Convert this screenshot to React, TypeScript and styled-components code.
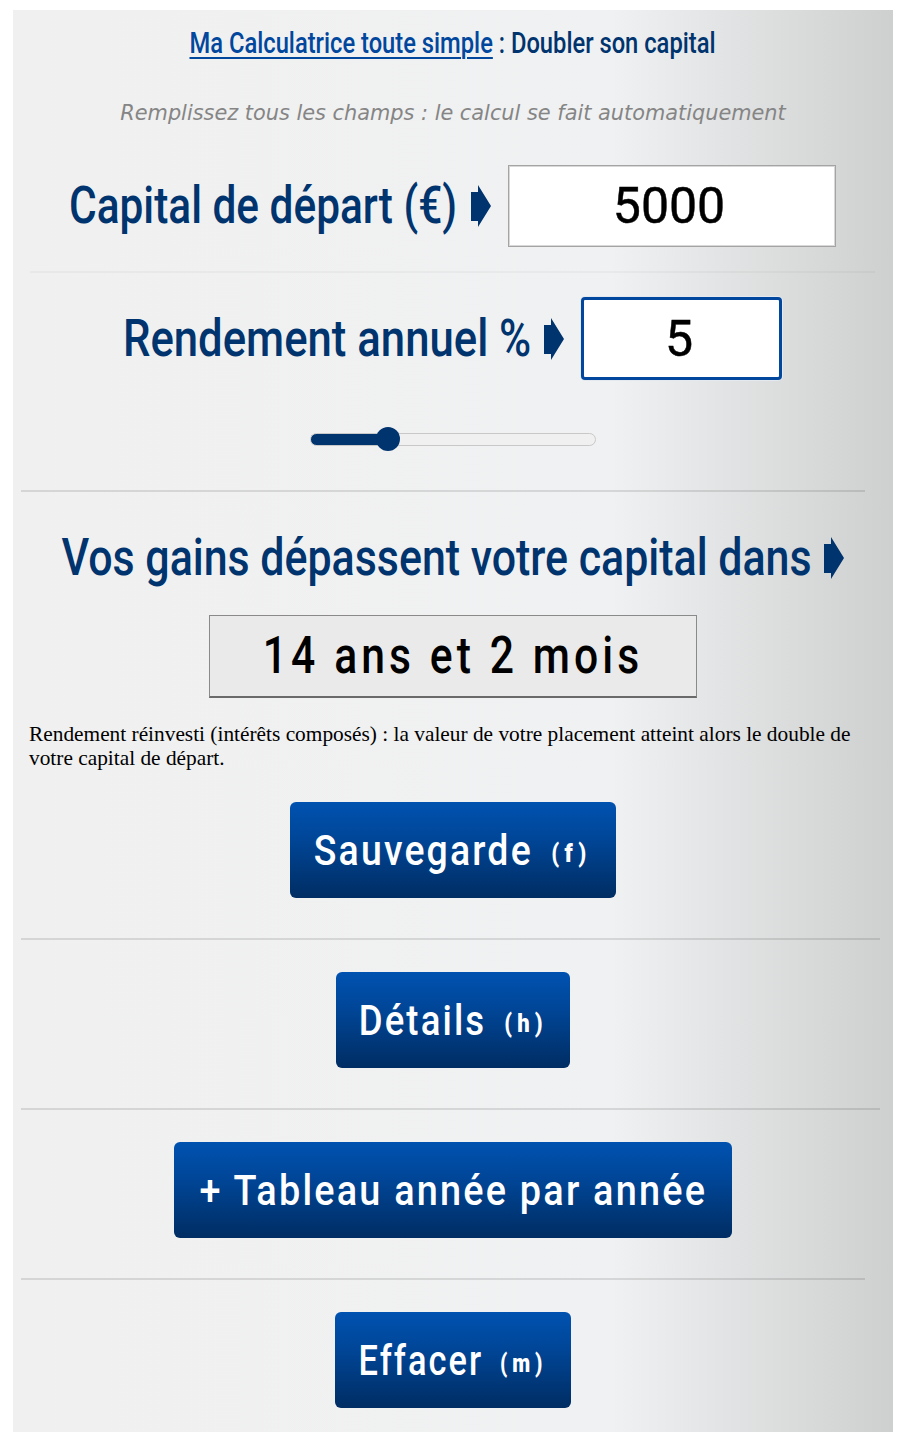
import { createGlobalStyle, styled } from "styled-components";

const GlobalStyle = createGlobalStyle`
  html, body {
    margin: 0;
    padding: 0;
    background: #fff;
  }
  #root {
    padding: 10px 13px;
  }
`;

const display = `Roboto, "Liberation Sans", sans-serif`;

const Panel = styled.main`
  box-sizing: border-box;
  width: 880px;
  height: 1422px;
  padding-top: 16px;
  background: linear-gradient(90deg, #f0f0f0 0%, #f0f1f2 68%, #cecfcf 100%);
  display: flex;
  flex-direction: column;
  align-items: center;
`;

// the original face is a tall condensed one, so the text gets narrowed in its box
const Squeeze = styled.span<{ $width: number; $x: number }>`
  flex: none;
  display: flex;
  justify-content: center;
  width: ${(p) => p.$width}px;
  white-space: nowrap;
  > span {
    flex: none;
    transform: scaleX(${(p) => p.$x});
    transform-origin: center;
  }
`;

const Title = styled.h1`
  margin: 0;
  height: 34px;
  font: 500 30px/34px ${display};
  color: #00346e;
  a {
    color: #00479d;
    text-decoration: underline;
    text-decoration-thickness: 2px;
    text-underline-offset: 4px;
  }
`;

const Hint = styled.p`
  margin: 38px 0 0;
  height: 30px;
  font: italic 400 20.85px/30px "DejaVu Sans", sans-serif;
  color: #858585;
`;

const FieldRow = styled.div<{ $mt: number }>`
  margin-top: ${(p) => p.$mt}px;
  display: flex;
  align-items: center;
`;

const Label = styled.label`
  font: 500 52px/60px ${display};
  color: #00346e;
`;

const ArrowIcon = styled.svg`
  flex: none;
  width: 20px;
  height: 42px;
  margin: 0 17px 0 14px;
  fill: #00346e;
`;

const NumberBox = styled.input<{ $width: number; $focused?: boolean }>`
  box-sizing: border-box;
  width: ${(p) => p.$width}px;
  height: ${(p) => (p.$focused ? 83 : 82)}px;
  padding: 0 5px 0 0;
  background: #fff;
  border: ${(p) => (p.$focused ? "3px solid #00479d" : "1px solid #a4a4a4")};
  border-radius: ${(p) => (p.$focused ? "4px" : "0")};
  box-shadow: ${(p) =>
    p.$focused ? "0 0 0 1px #e4e9ef" : "inset 0 0 0 1px #d8d8d8"};
  outline: none;
  font: 400 50px/1 ${display};
  -webkit-text-stroke: 0.5px #000;
  color: #000;
  text-align: center;
`;

const Rule = styled.hr<{
  $left: number;
  $right: number;
  $mt: number;
  $faint?: boolean;
}>`
  flex: none;
  align-self: stretch;
  margin: ${(p) => p.$mt}px ${(p) => p.$right}px 0 ${(p) => p.$left}px;
  height: 2px;
  border: 0;
  background: ${(p) => (p.$faint ? "rgba(0,0,0,0.03)" : "rgba(0,0,0,0.11)")};
`;

const Slider = styled.input`
  appearance: none;
  -webkit-appearance: none;
  display: block;
  width: 286px;
  height: 24px;
  margin: 47px 0 0;
  background: transparent;

  &::-webkit-slider-runnable-track {
    box-sizing: border-box;
    height: 13px;
    border: 1px solid #c8c8c8;
    border-radius: 7px;
    background: linear-gradient(90deg, #00346e 27%, #f0f0f0 27%);
  }
  &::-webkit-slider-thumb {
    -webkit-appearance: none;
    width: 24px;
    height: 24px;
    margin-top: -6.5px;
    border: 0;
    border-radius: 50%;
    background: #00346e;
  }
`;

const ResultHeading = styled.h2`
  margin: 41px 0 0;
  display: flex;
  align-items: center;
  font: 500 52px/50px ${display};
  color: #00346e;
  svg {
    margin: 0 0 0 13px;
  }
`;

const ResultBox = styled.output`
  box-sizing: border-box;
  display: flex;
  justify-content: center;
  margin-top: 32px;
  width: 488px;
  height: 83px;
  background: #eaeaea;
  border: 1px solid #8a8a8a;
  border-bottom: 2px solid #6a6a6a;
  font: 500 52px/80px ${display};
  letter-spacing: 5px;
  color: #000;
`;

const Note = styled.p`
  align-self: stretch;
  margin: 24px 16px 0;
  font: 400 21.35px/24px "Liberation Serif", serif;
  color: #000;
`;

const ActionButton = styled.button<{ $width: number; $mt: number }>`
  flex: none;
  display: flex;
  align-items: center;
  justify-content: center;
  margin-top: ${(p) => p.$mt}px;
  width: ${(p) => p.$width}px;
  height: 96px;
  padding: 0;
  border: 0;
  border-radius: 6px;
  background: linear-gradient(180deg, #0052b0 0%, #00479a 35%, #002d63 100%);
  color: #fff;
  font: 500 43px/1 ${display};
  letter-spacing: 2.5px;
`;

const Shortcut = styled.span`
  margin-left: 8px;
  font-size: 26px;
  font-weight: 900;
  letter-spacing: 6px;
  vertical-align: 3px;
`;

const Arrow = () => (
  <ArrowIcon viewBox="0 0 20 42" aria-hidden="true">
    <path d="M0 7h7V0l13 21L7 42v-6H0z" />
  </ArrowIcon>
);

export default function App() {
  return (
    <>
      <GlobalStyle />
      <Panel>
        <Title>
          <Squeeze $width={526} $x={0.791}>
            <span>
              <a href="#">Ma Calculatrice toute simple</a> : Doubler son capital
            </span>
          </Squeeze>
        </Title>
        <Hint>Remplissez tous les champs : le calcul se fait automatiquement</Hint>

        <FieldRow $mt={37}>
          <Label>
            <Squeeze $width={386} $x={0.815}>
              <span>Capital de départ (€)</span>
            </Squeeze>
          </Label>
          <Arrow />
          <NumberBox $width={328} value="5000" readOnly />
        </FieldRow>
        <Rule $mt={24} $left={17} $right={18} $faint />

        <FieldRow $mt={24}>
          <Label>
            <Squeeze $width={406} $x={0.84}>
              <span>Rendement annuel %</span>
            </Squeeze>
          </Label>
          <Arrow />
          <NumberBox $width={201} $focused value="5" readOnly />
        </FieldRow>
        <Slider type="range" min={0} max={20} defaultValue={5} />
        <Rule $mt={39} $left={8} $right={28} />

        <ResultHeading>
          <Squeeze $width={748} $x={0.825}>
            <span>Vos gains dépassent votre capital dans</span>
          </Squeeze>
          <Arrow />
        </ResultHeading>
        <ResultBox>
          <Squeeze $width={376} $x={0.82}>
            <span>14 ans et 2 mois</span>
          </Squeeze>
        </ResultBox>
        <Note>
          Rendement réinvesti (intérêts composés) : la valeur de votre placement
          atteint alors le double de votre capital de départ.
        </Note>

        <ActionButton $width={326} $mt={32}>
          <Squeeze $width={277} $x={0.87}>
            <span>
              Sauvegarde <Shortcut>(f)</Shortcut>
            </span>
          </Squeeze>
        </ActionButton>
        <Rule $mt={40} $left={8} $right={13} />
        <ActionButton $width={234} $mt={32}>
          <Squeeze $width={184} $x={0.85}>
            <span>
              Détails <Shortcut>(h)</Shortcut>
            </span>
          </Squeeze>
        </ActionButton>
        <Rule $mt={40} $left={8} $right={13} />
        <ActionButton $width={558} $mt={32}>
          <Squeeze $width={505} $x={0.88}>
            <span>+ Tableau année par année</span>
          </Squeeze>
        </ActionButton>
        <Rule $mt={40} $left={8} $right={28} />
        <ActionButton $width={236} $mt={32}>
          <Squeeze $width={184} $x={0.8}>
            <span>
              Effacer <Shortcut>(m)</Shortcut>
            </span>
          </Squeeze>
        </ActionButton>
      </Panel>
    </>
  );
}
